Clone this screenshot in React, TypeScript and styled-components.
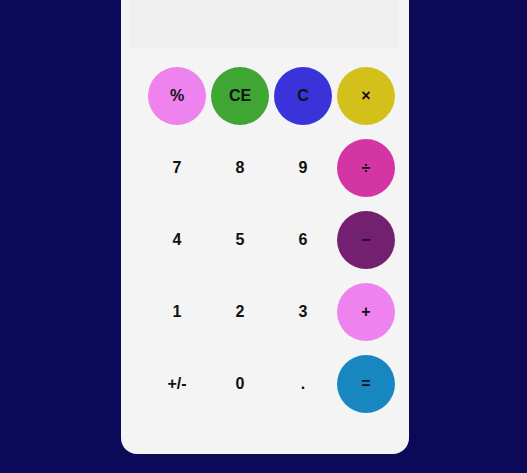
import React from "react";
import styled, { createGlobalStyle } from "styled-components";

const Global = createGlobalStyle`
  html, body { margin: 0; padding: 0; background: #0c0a58; overflow: hidden; }
  body { font-family: "Liberation Sans", Arial, sans-serif; }
`;

const Page = styled.div`
  width: 527px;
  height: 473px;
  display: flex;
  justify-content: center;
  align-items: flex-start;
  padding-left: 3px;
  box-sizing: border-box;
`;

const Card = styled.div`
  width: 288px;
  margin-top: -20px;
  padding: 10px 10px 41px 9px;
  box-sizing: border-box;
  background: #f4f4f4;
  border-radius: 16px;
  display: flex;
  flex-direction: column;
  gap: 19px;
`;

const Display = styled.div`
  height: 58px;
  background: #efefef;
`;

const Keys = styled.div`
  display: grid;
  grid-template-columns: repeat(4, 58px);
  grid-auto-rows: 58px;
  column-gap: 5px;
  row-gap: 14px;
  padding-left: 18px;
`;

const Key = styled.button<{ $bg?: string }>`
  width: 58px;
  height: 58px;
  border: none;
  border-radius: 50%;
  background: ${(p) => p.$bg || "transparent"};
  color: #111;
  font-family: "Liberation Sans", Arial, sans-serif;
  font-weight: bold;
  font-size: 16px;
  display: flex;
  align-items: center;
  justify-content: center;
  padding: 0;
  cursor: pointer;
`;

const keys: { label: string; bg?: string }[] = [
  { label: "%", bg: "#ee82ee" },
  { label: "CE", bg: "#3fa534" },
  { label: "C", bg: "#3a33d9" },
  { label: "×", bg: "#d4c01b" },
  { label: "7" },
  { label: "8" },
  { label: "9" },
  { label: "÷", bg: "#d335a3" },
  { label: "4" },
  { label: "5" },
  { label: "6" },
  { label: "−", bg: "#72206f" },
  { label: "1" },
  { label: "2" },
  { label: "3" },
  { label: "+", bg: "#ee82ee" },
  { label: "+/-" },
  { label: "0" },
  { label: "." },
  { label: "=", bg: "#1987bf" },
];

export default function App() {
  return (
    <>
      <Global />
      <Page>
        <Card>
          <Display />
          <Keys>
            {keys.map((k) => (
              <Key key={k.label} $bg={k.bg}>
                {k.label}
              </Key>
            ))}
          </Keys>
        </Card>
      </Page>
    </>
  );
}
